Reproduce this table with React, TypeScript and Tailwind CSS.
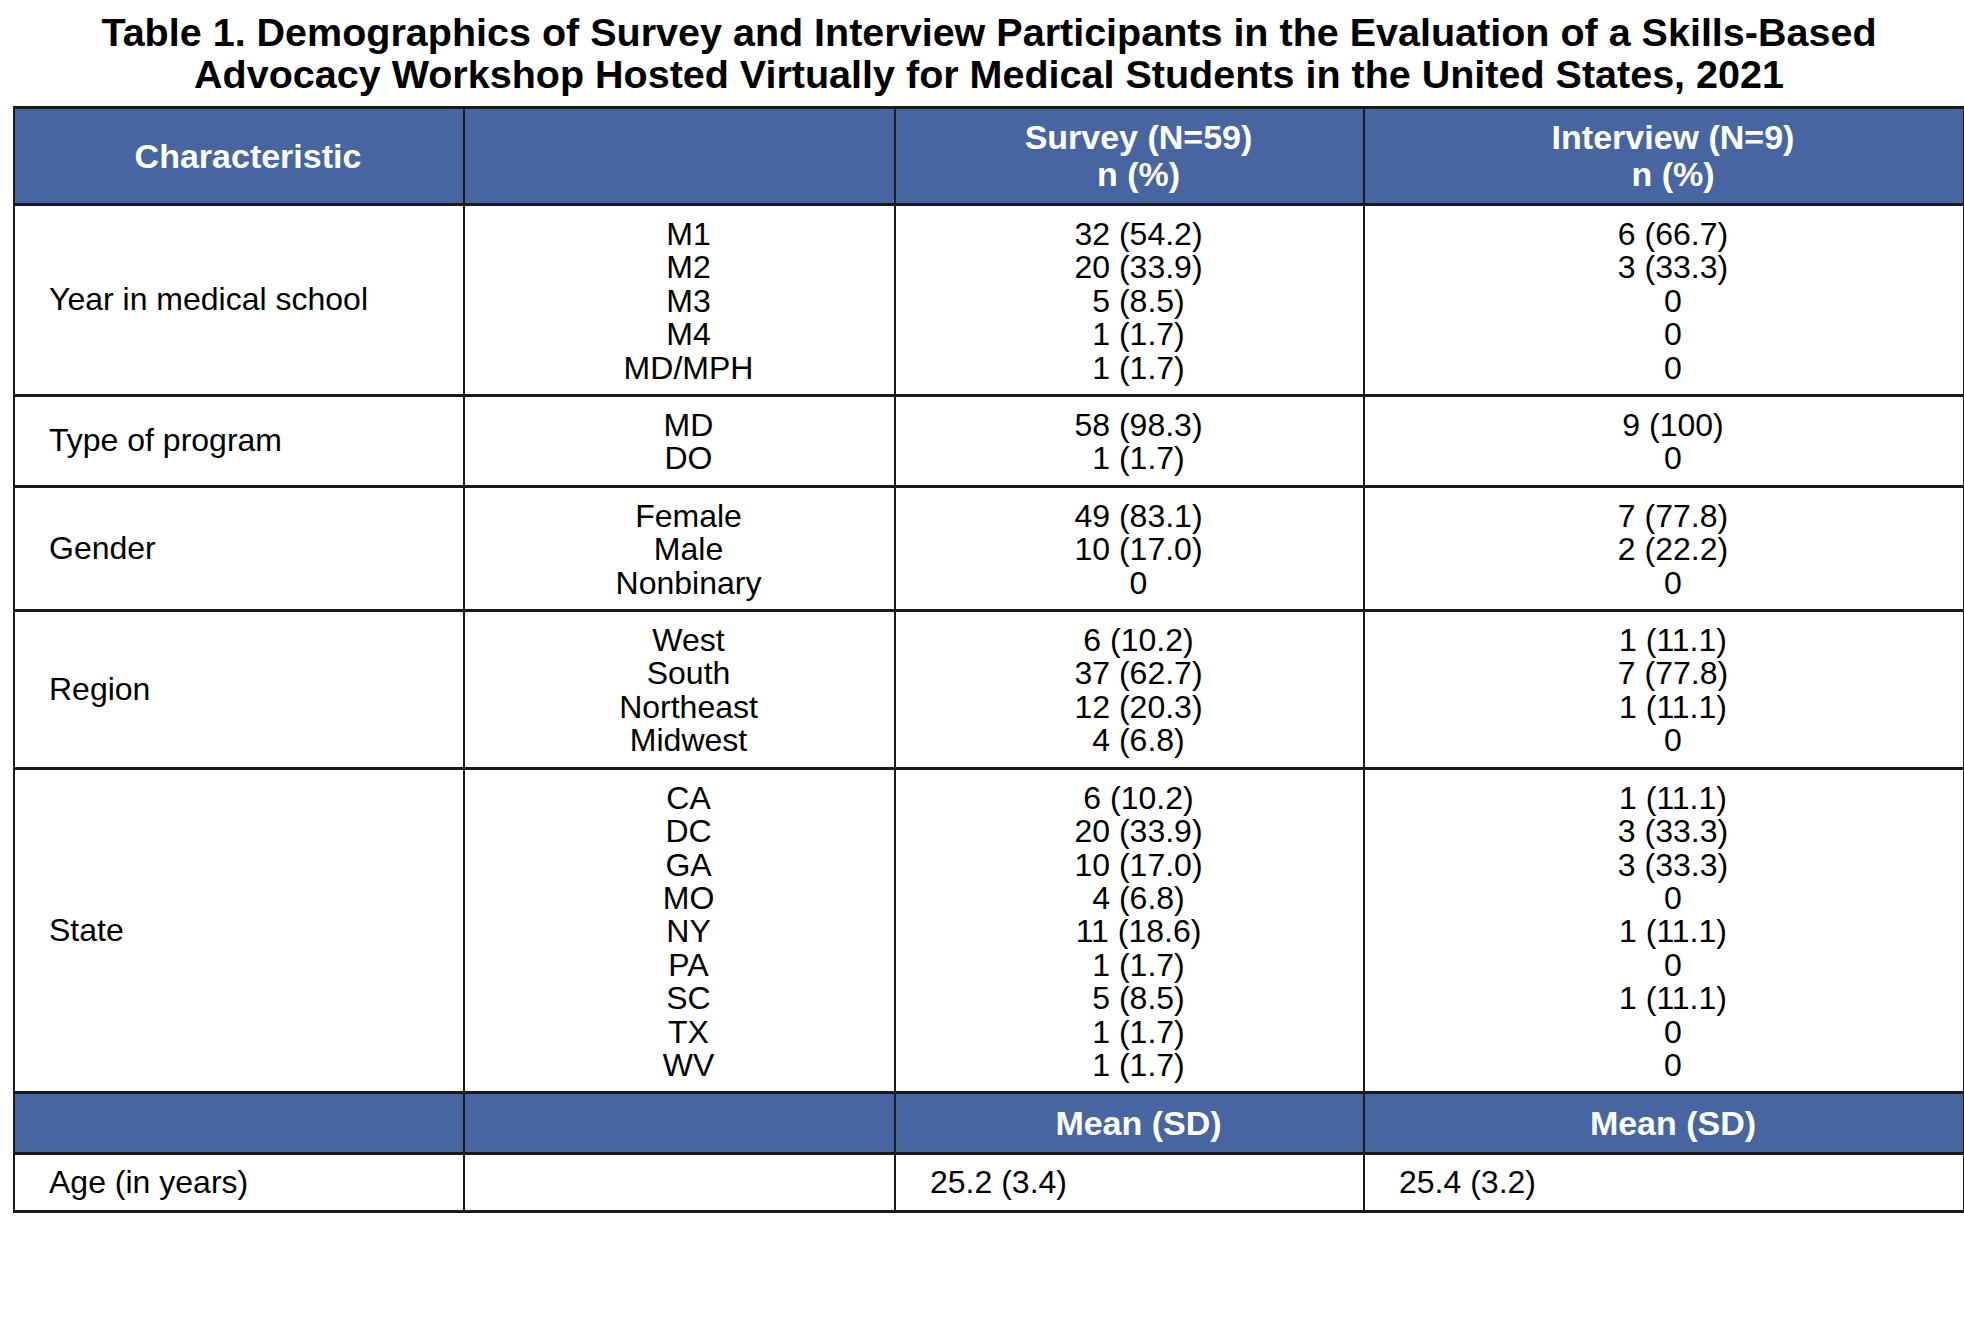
const rows: { label: string; items: string[]; survey: string[]; interview: string[] }[] = [
  {
    label: "Year in medical school",
    items: ["M1", "M2", "M3", "M4", "MD/MPH"],
    survey: ["32 (54.2)", "20 (33.9)", "5 (8.5)", "1 (1.7)", "1 (1.7)"],
    interview: ["6 (66.7)", "3 (33.3)", "0", "0", "0"],
  },
  {
    label: "Type of program",
    items: ["MD", "DO"],
    survey: ["58 (98.3)", "1 (1.7)"],
    interview: ["9 (100)", "0"],
  },
  {
    label: "Gender",
    items: ["Female", "Male", "Nonbinary"],
    survey: ["49 (83.1)", "10 (17.0)", "0"],
    interview: ["7 (77.8)", "2 (22.2)", "0"],
  },
  {
    label: "Region",
    items: ["West", "South", "Northeast", "Midwest"],
    survey: ["6 (10.2)", "37 (62.7)", "12 (20.3)", "4 (6.8)"],
    interview: ["1 (11.1)", "7 (77.8)", "1 (11.1)", "0"],
  },
  {
    label: "State",
    items: ["CA", "DC", "GA", "MO", "NY", "PA", "SC", "TX", "WV"],
    survey: ["6 (10.2)", "20 (33.9)", "10 (17.0)", "4 (6.8)", "11 (18.6)", "1 (1.7)", "5 (8.5)", "1 (1.7)", "1 (1.7)"],
    interview: ["1 (11.1)", "3 (33.3)", "3 (33.3)", "0", "1 (11.1)", "0", "1 (11.1)", "0", "0"],
  },
];

const cell = "border-x-2 border-y-[3px] border-[#1a1a1a]";
const head = `${cell} bg-[#4766a1] text-white font-bold text-[34px] leading-[37px] text-center pl-[24px] pr-[6px]`;
const data = `${cell} pl-[24px] pr-[6px] pt-[12px] pb-[9px] text-center`;

function Lines({ values }: { values: string[] }) {
  return (
    <>
      {values.map((v, i) => (
        <div key={i}>{v}</div>
      ))}
    </>
  );
}

export default function App() {
  return (
    <div className="min-h-[1339px] w-[1964px] bg-white text-black font-['Liberation_Sans',Arial,sans-serif]">
      <h1 className="pl-[14px] pt-[11px] text-center text-[39.5px] font-bold leading-[42px]">
        Table 1. Demographics of Survey and Interview Participants in the Evaluation of a Skills-Based
        <br />
        Advocacy Workshop Hosted Virtually for Medical Students in the United States, 2021
      </h1>

      <table className="ml-[13px] mt-[11px] w-[1950px] table-fixed border-collapse border-2 border-[#1a1a1a] text-[32px] leading-[33.4px]">
        <colgroup>
          <col className="w-[450px]" />
          <col className="w-[431px]" />
          <col className="w-[469px]" />
          <col className="w-[600px]" />
        </colgroup>
        <thead>
          <tr className="h-[97px]">
            <th className={head}>Characteristic</th>
            <th className={head}></th>
            <th className={head}>
              Survey (N=59)
              <br />n (%)
            </th>
            <th className={head}>
              Interview (N=9)
              <br />n (%)
            </th>
          </tr>
        </thead>
        <tbody>
          {rows.map((r) => (
            <tr key={r.label}>
              <td className={`${cell} px-[34px] align-middle`}>{r.label}</td>
              <td className={data}>
                <Lines values={r.items} />
              </td>
              <td className={data}>
                <Lines values={r.survey} />
              </td>
              <td className={data}>
                <Lines values={r.interview} />
              </td>
            </tr>
          ))}
          <tr className="h-[61px]">
            <td className={head}></td>
            <td className={head}></td>
            <td className={head}>Mean (SD)</td>
            <td className={head}>Mean (SD)</td>
          </tr>
          <tr className="h-[58px]">
            <td className={`${cell} px-[34px]`}>Age (in years)</td>
            <td className={cell}></td>
            <td className={`${cell} px-[34px]`}>25.2 (3.4)</td>
            <td className={`${cell} px-[34px]`}>25.4 (3.2)</td>
          </tr>
        </tbody>
      </table>
    </div>
  );
}
